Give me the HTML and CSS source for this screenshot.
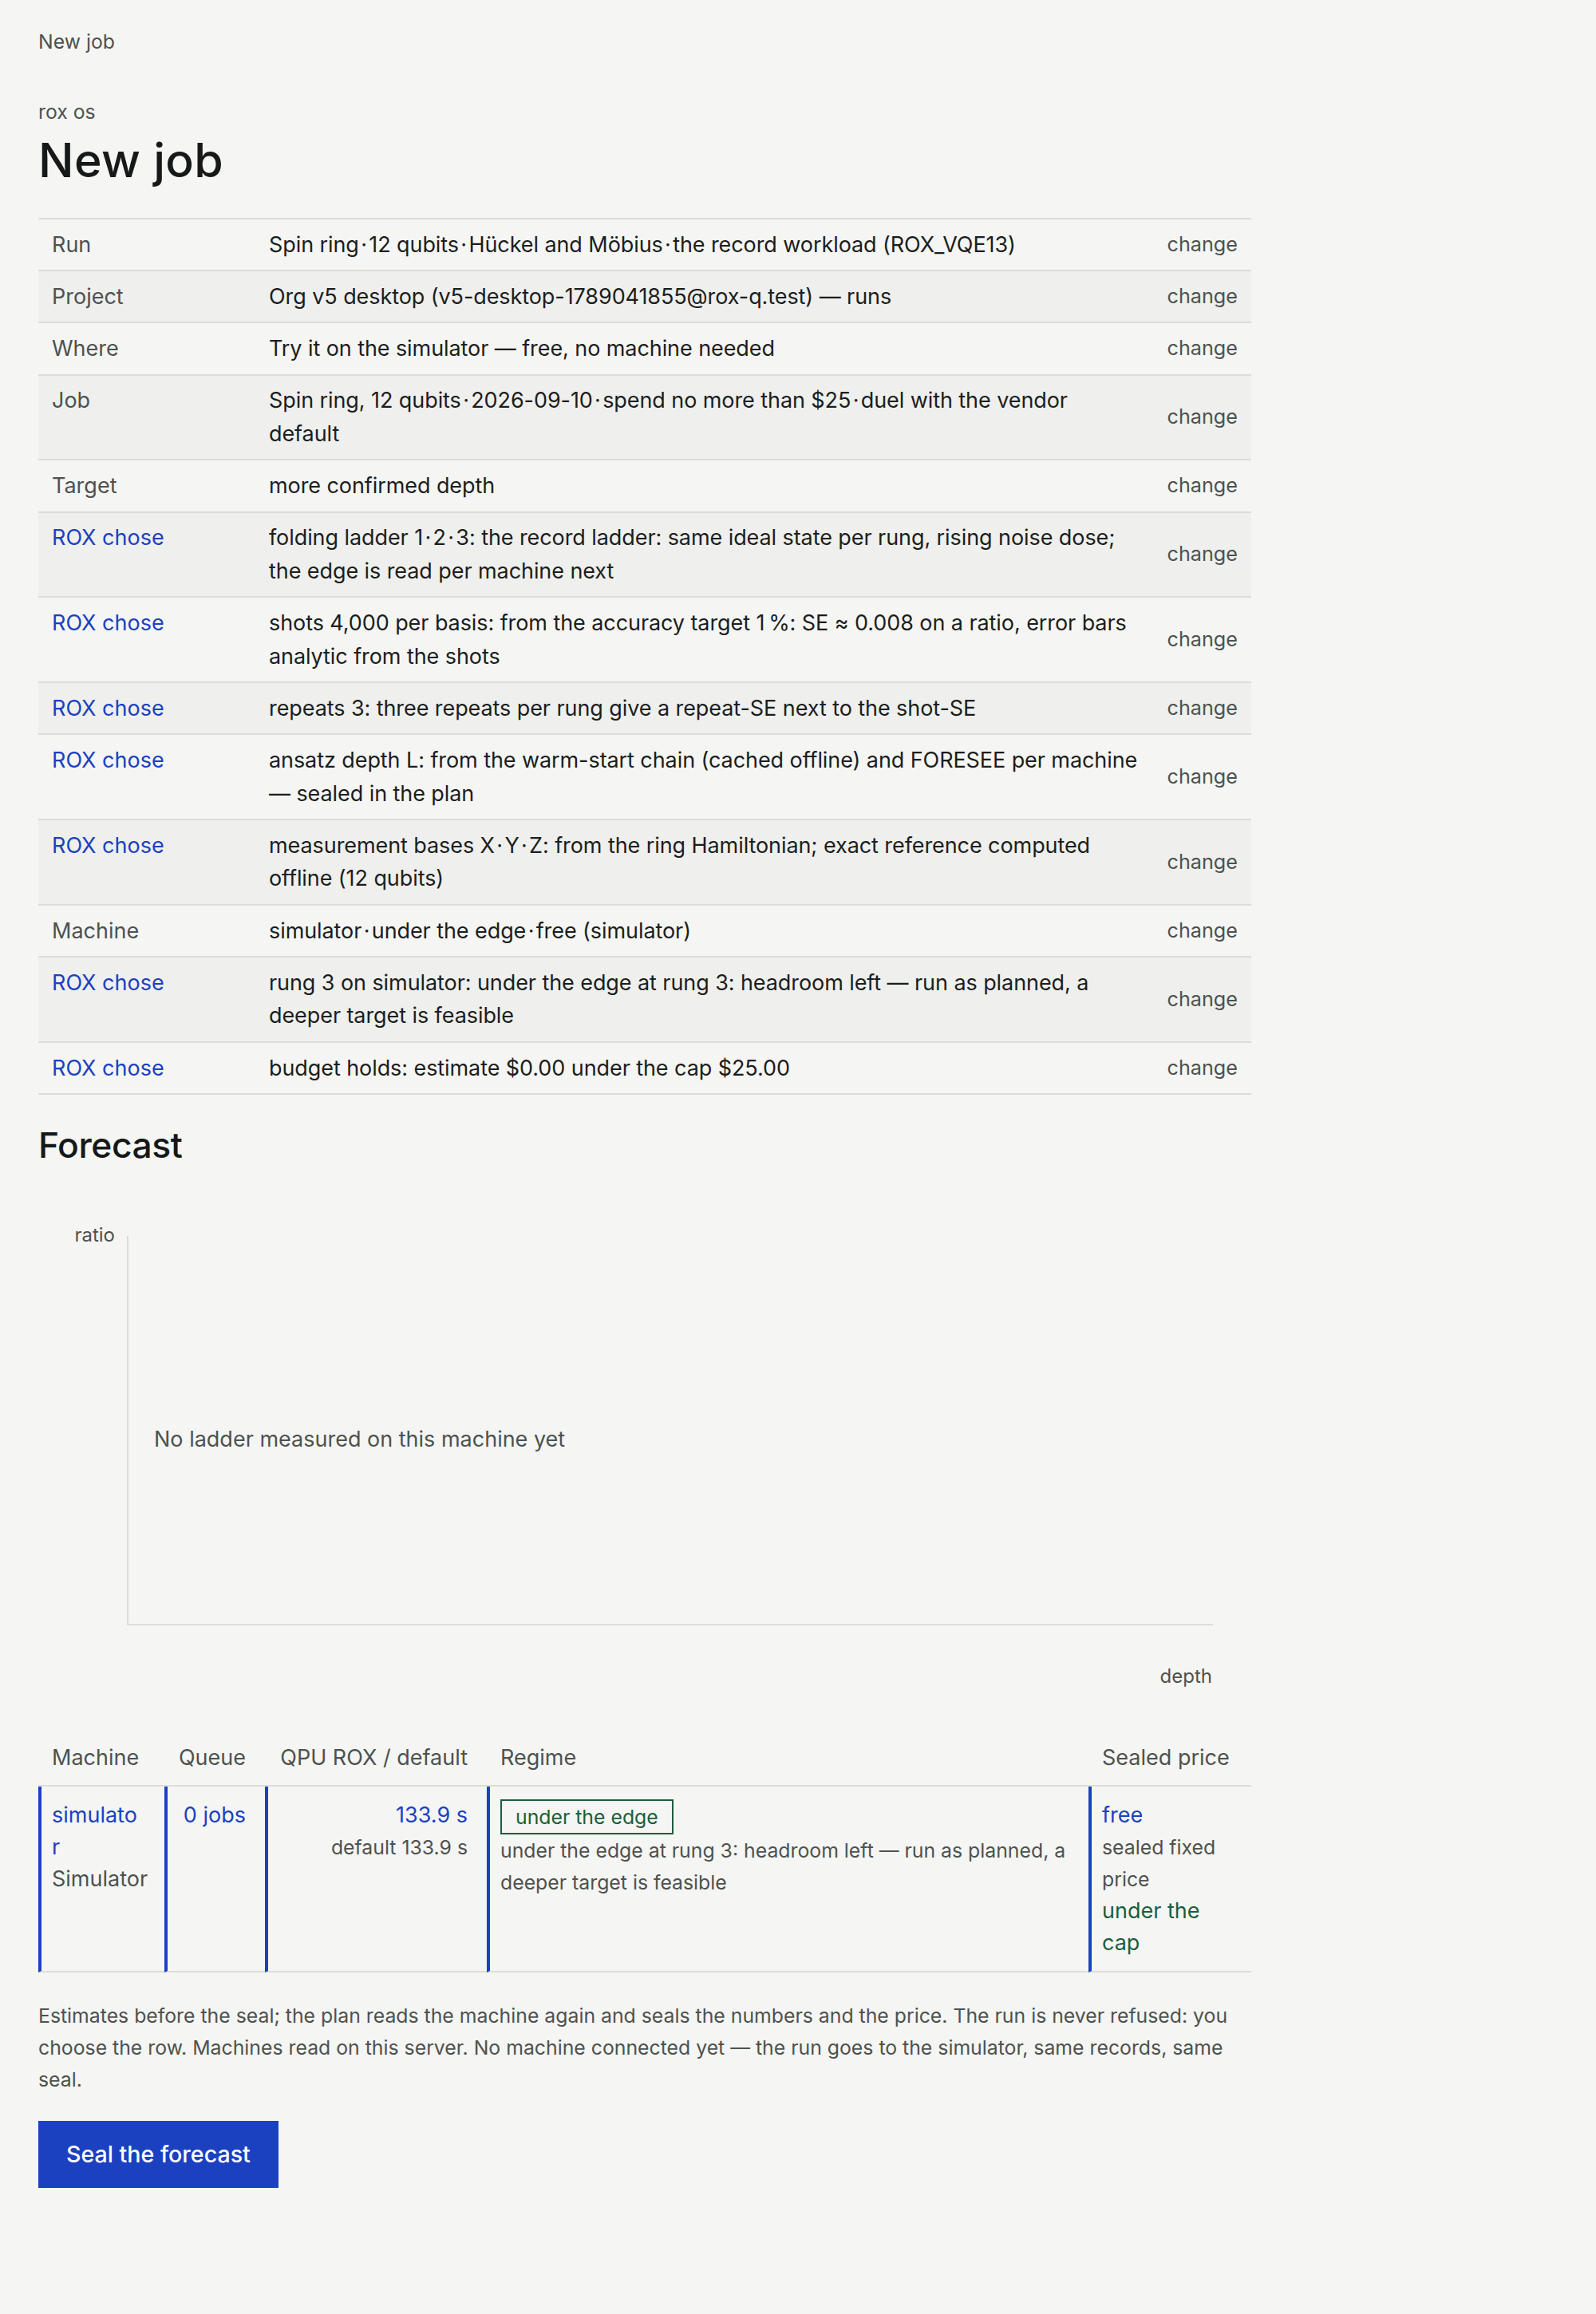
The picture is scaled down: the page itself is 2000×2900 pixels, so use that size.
FILE: index.html
```html
<!DOCTYPE html>
<html lang="en">
<head>
<meta charset="utf-8">
<title>New job</title>
<link rel="stylesheet" href="styles.css">
</head>
<body>
<main class="page">
  <nav class="crumb">New job</nav>
  <p class="eyebrow">rox os</p>
  <h1 class="title">New job</h1>

  <table class="summary">
    <colgroup><col class="c-key"><col><col class="c-act"></colgroup>
    <tbody>
      <tr><td class="k">Run</td><td class="v">Spin ring&#8202;·&#8202;12 qubits&#8202;·&#8202;Hückel and Möbius&#8202;·&#8202;the record workload (ROX_VQE13)</td><td class="act">change</td></tr>
      <tr><td class="k">Project</td><td class="v">Org v5 desktop (v5-desktop-1789041855@rox-q.test) — runs</td><td class="act">change</td></tr>
      <tr><td class="k">Where</td><td class="v">Try it on the simulator — free, no machine needed</td><td class="act">change</td></tr>
      <tr><td class="k">Job</td><td class="v">Spin ring, 12 qubits&#8202;·&#8202;2026-09-10&#8202;·&#8202;spend no more than $25&#8202;·&#8202;duel with the vendor default</td><td class="act">change</td></tr>
      <tr><td class="k">Target</td><td class="v">more confirmed depth</td><td class="act">change</td></tr>
      <tr><td class="k rox">ROX chose</td><td class="v">folding ladder 1&#8202;·&#8202;2&#8202;·&#8202;3: the record ladder: same ideal state per rung, rising noise dose; the edge is read per machine next</td><td class="act">change</td></tr>
      <tr><td class="k rox">ROX chose</td><td class="v">shots 4,000 per basis: from the accuracy target 1&#8239;%: SE ≈ 0.008 on a ratio, error bars analytic from the shots</td><td class="act">change</td></tr>
      <tr><td class="k rox">ROX chose</td><td class="v">repeats 3: three repeats per rung give a repeat-SE next to the shot-SE</td><td class="act">change</td></tr>
      <tr><td class="k rox">ROX chose</td><td class="v">ansatz depth L: from the warm-start chain (cached offline) and FORESEE per machine — sealed in the plan</td><td class="act">change</td></tr>
      <tr><td class="k rox">ROX chose</td><td class="v">measurement bases X&#8202;·&#8202;Y&#8202;·&#8202;Z: from the ring Hamiltonian; exact reference computed offline (12 qubits)</td><td class="act">change</td></tr>
      <tr><td class="k">Machine</td><td class="v">simulator&#8202;·&#8202;under the edge&#8202;·&#8202;free (simulator)</td><td class="act">change</td></tr>
      <tr><td class="k rox">ROX chose</td><td class="v">rung 3 on simulator: under the edge at rung 3: headroom left — run as planned, a deeper target is feasible</td><td class="act">change</td></tr>
      <tr><td class="k rox">ROX chose</td><td class="v">budget holds: estimate $0.00 under the cap $25.00</td><td class="act">change</td></tr>
    </tbody>
  </table>

  <h2 class="section">Forecast</h2>

  <svg class="chart" width="1520" height="640" viewBox="0 0 1520 640" role="img" aria-label="Forecast chart">
    <text class="axis-label" x="96" y="65" text-anchor="end">ratio</text>
    <line class="axis" x1="112" y1="58" x2="112" y2="546"></line>
    <line class="axis" x1="111" y1="545" x2="1472" y2="545"></line>
    <text class="empty" x="145" y="322">No ladder measured on this machine yet</text>
    <text class="axis-label" x="1471" y="618" text-anchor="end">depth</text>
  </svg>

  <table class="machines">
    <colgroup>
      <col class="m1"><col class="m2"><col class="m3"><col class="m4"><col class="m5">
    </colgroup>
    <thead>
      <tr>
        <th>Machine</th>
        <th class="num">Queue</th>
        <th class="num">QPU ROX / default</th>
        <th>Regime</th>
        <th>Sealed price</th>
      </tr>
    </thead>
    <tbody>
      <tr>
        <td class="machine"><span class="link name">simulator</span><div class="main-muted">Simulator</div></td>
        <td class="num"><span class="link">0 jobs</span></td>
        <td class="num"><div class="link">133.9 s</div><div class="small">default 133.9 s</div></td>
        <td>
          <div class="badge-row"><span class="badge">under the edge</span></div>
          <div class="small">under the edge at rung 3: headroom left — run as planned, a deeper target is feasible</div>
        </td>
        <td><div class="link">free</div><div class="small">sealed fixed price</div><div class="ok">under the cap</div></td>
      </tr>
    </tbody>
  </table>

  <p class="note">Estimates before the seal; the plan reads the machine again and seals the numbers and the price. The run is never refused: you choose the row. Machines read on this server. No machine connected yet — the run goes to the simulator, same records, same seal.</p>

  <button class="primary" type="button">Seal the forecast</button>
</main>
</body>
</html>
```

FILE: styles.css
```css
html {
  background: #f5f5f3;
}

body {
  margin: 0;
  font-family: Inter, "Noto Sans", "Liberation Sans", sans-serif;
  font-size: 27px;
  line-height: 41.6px;
  color: #1b1e1d;
}

.page {
  width: 1520px;
  padding: 32px 48px 120px;
}

.crumb {
  display: block;
  font-size: 24.8px;
  line-height: 41.6px;
  color: #4d524f;
}

.eyebrow {
  margin: 46px 0 0;
  font-size: 24.8px;
  line-height: 41.6px;
  color: #4d524f;
}

.title {
  margin: 5px 0 36px;
  font-size: 59px;
  line-height: 70.8px;
  font-weight: 500;
  letter-spacing: 0.005em;
  color: #161918;
}

/* summary table */
.summary {
  width: 100%;
  border-collapse: collapse;
  table-layout: fixed;
  border-top: 2px solid #dcdcda;
}

.summary .c-key {
  width: 272px;
}

.summary .c-act {
  width: 120px;
}

.summary td {
  padding: 10.8px 17px;
  border-bottom: 2px solid #dcdcda;
  vertical-align: top;
}

.summary tr:nth-child(even) {
  background: #efefed;
}

.summary .k {
  color: #4d524f;
}

.summary .k.rox {
  color: #1b41c1;
}

.summary .v {
  letter-spacing: -0.003em;
}

.summary .act {
  padding-left: 0;
  text-align: right;
  vertical-align: middle;
  font-size: 25.2px;
  color: #4d524f;
}

/* forecast */
.section {
  margin: 37px 0 29px;
  font-size: 44.4px;
  line-height: 53.3px;
  font-weight: 500;
  letter-spacing: -0.01em;
  color: #161918;
}

.chart {
  display: block;
}

.chart .axis {
  stroke: #dcdcda;
  stroke-width: 2;
}

.chart .axis-label {
  font-family: Inter, "Noto Sans", sans-serif;
  font-size: 24px;
  fill: #4d524f;
}

.chart .empty {
  font-family: Inter, "Noto Sans", sans-serif;
  font-size: 27px;
  fill: #4d524f;
}

/* machines table */
.machines {
  width: 100%;
  margin-top: 40px;
  border-collapse: separate;
  border-spacing: 0;
  table-layout: fixed;
}

.machines .m1 { width: 158px; }
.machines .m2 { width: 126px; }
.machines .m3 { width: 278px; }
.machines .m4 { width: 754px; }
.machines .m5 { width: 204px; }

.machines th {
  padding: 10.8px 24px 13px 17px;
  border-bottom: 2px solid #dcdcda;
  font-weight: 400;
  text-align: left;
  white-space: nowrap;
  color: #4d524f;
}

.machines td {
  padding: 16px 24px 15px 13px;
  border-left: 4px solid #1b41c1;
  border-bottom: 2px solid #dcdcda;
  vertical-align: top;
  line-height: 40px;
}

.machines td.machine {
  padding-right: 27px;
}

.machines .num {
  text-align: right;
}

.link {
  color: #1b41c1;
}

.name {
  overflow-wrap: anywhere;
}

.main-muted {
  color: #4d524f;
  white-space: nowrap;
}

.small {
  font-size: 24.8px;
  line-height: 40px;
  color: #4d524f;
}

.ok {
  color: #1b5e3b;
}

.badge-row {
  display: flex;
}

.badge {
  padding: 0 17px;
  border: 2px solid #1b5e3b;
  font-size: 24.8px;
  line-height: 40px;
  color: #1b5e3b;
}

.note {
  margin: 34px 0 0;
  font-size: 24.8px;
  line-height: 40px;
  color: #4d524f;
}

.primary {
  display: inline-block;
  margin-top: 32px;
  height: 84px;
  padding: 0 35px;
  border: 0;
  background: #1b41c1;
  color: #ffffff;
  font-family: Inter, "Noto Sans", sans-serif;
  font-size: 28.6px;
  font-weight: 500;
}
```
